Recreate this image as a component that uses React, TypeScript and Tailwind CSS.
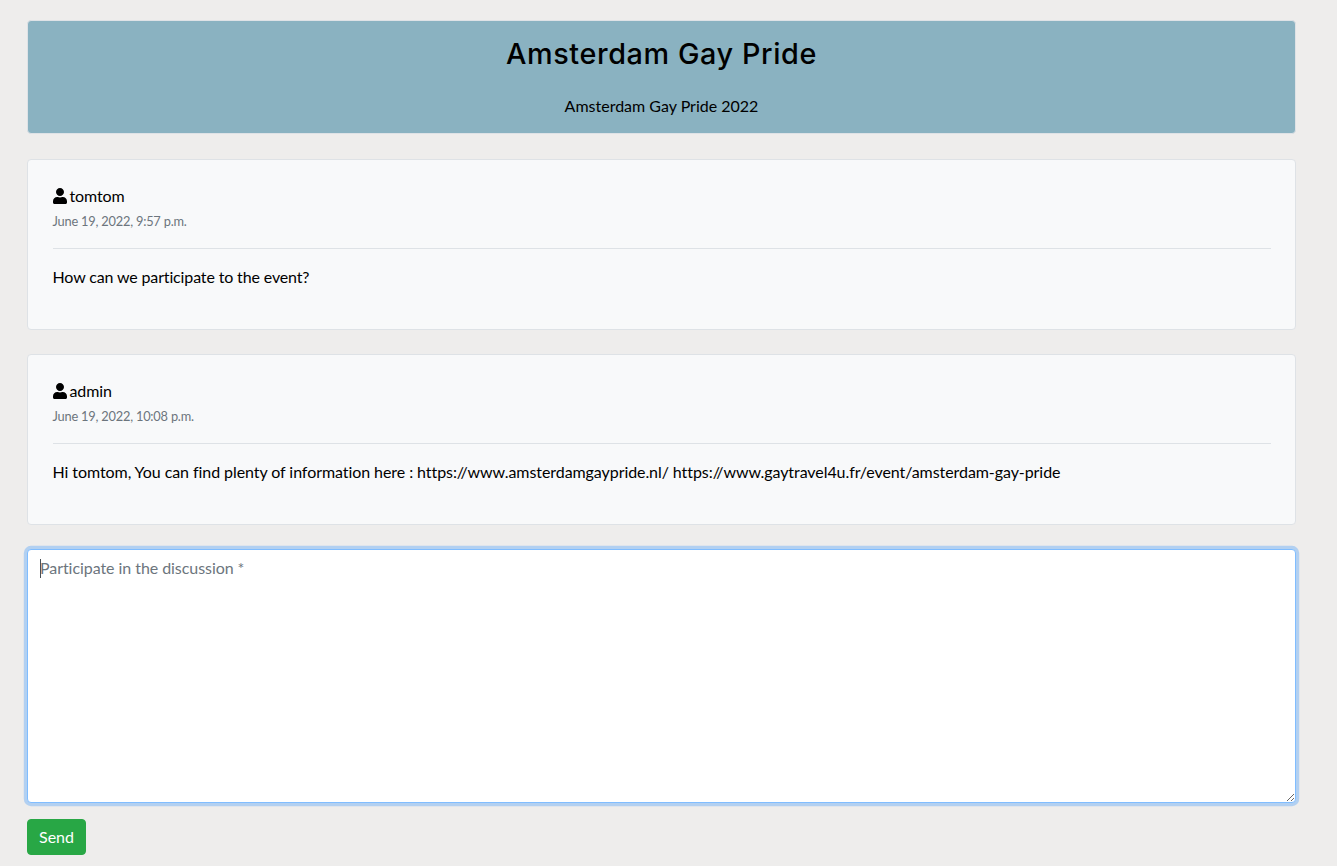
import { FaUser } from "react-icons/fa";

function Comment({ author, date, body, bodyClass }: { author: string; date: string; body: string; bodyClass: string }) {
  return (
    <div className="h-[171px] rounded-[4px] border border-[#dee2e6] bg-[#f8f9fa] pl-[24.5px] pr-[24px] pt-[24px]">
      <div className="flex h-[24px] items-center text-[16px] leading-[24px] text-black">
        <FaUser className="mr-[3px] h-[16px] w-[14px]" />
        <span className="tracking-[-0.1px]">{author}</span>
      </div>
      <div className="mt-[1px] h-[24px] text-[12.8px] leading-[24px] tracking-[-0.2px] text-[#6c757d]">{date}</div>
      <div className="mt-[15px] h-px bg-[#dee2e6]" />
      <p className={`mt-[16px] text-[16px] leading-[24px] text-black ${bodyClass}`}>{body}</p>
    </div>
  );
}

export default function App() {
  return (
    <div className="min-h-[866px] bg-[#eeedec] pl-[27px] pt-[20px] font-['Lato','Liberation_Sans',sans-serif]">
      <div className="flex w-[1269px] flex-col">
        <div className="h-[114px] rounded-[4px] border border-[#dee2e6] bg-[#8ab2c1] text-center text-black">
          <h1 className="mt-[15px] font-['Inter','Open_Sans',sans-serif] text-[28.8px] font-medium leading-[36px] tracking-[0.6px]">
            Amsterdam Gay Pride
          </h1>
          <p className="mt-[22px] text-[16px] leading-[24px]">Amsterdam Gay Pride 2022</p>
        </div>
        <div className="mt-[25px] flex flex-col gap-[24px]">
          <Comment
            author="tomtom"
            date="June 19, 2022, 9:57 p.m."
            body="How can we participate to the event?"
            bodyClass="tracking-[-0.14px]"
          />
          <Comment
            author="admin"
            date="June 19, 2022, 10:08 p.m."
            body="Hi tomtom, You can find plenty of information here : https://www.amsterdamgaypride.nl/ https://www.gaytravel4u.fr/event/amsterdam-gay-pride"
            bodyClass="tracking-[-0.07px]"
          />
        </div>
        <div className="relative mt-[24px]">
          <textarea
            placeholder="Participate in the discussion *"
            className="block h-[254px] w-full rounded-[4px] border border-[#80bdff] bg-white px-[12px] py-[6px] text-[16px] leading-[24px] tracking-[-0.06px] text-[#495057] shadow-[0_0_0_3.2px_rgba(0,123,255,0.25)] outline-none placeholder:text-[#6c757d]"
          />
          <span className="absolute left-[13px] top-[10px] h-[19px] w-px bg-[#495057]" />
        </div>
        <button className="mt-[16px] h-[36px] w-[59px] rounded-[4px] border border-[#28a745] bg-[#28a745] text-[16px] leading-[24px] text-white">
          Send
        </button>
      </div>
    </div>
  );
}
